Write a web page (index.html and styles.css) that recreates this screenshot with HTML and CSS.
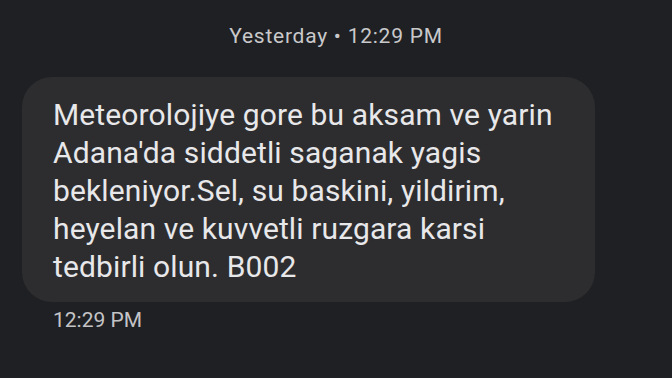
FILE: index.html
```html
<!DOCTYPE html>
<html>
<head>
<meta charset="utf-8">
<link rel="stylesheet" href="styles.css">
</head>
<body>
<div class="thread">
  <div class="day">Yesterday • 12:29 PM</div>
  <div class="bubble">Meteorolojiye gore bu aksam ve yarin<br>Adana'da siddetli saganak yagis<br>bekleniyor.Sel, su baskini, yildirim,<br>heyelan ve kuvvetli ruzgara karsi<br>tedbirli olun. B002</div>
  <div class="time">12:29 PM</div>
</div>
</body>
</html>
```
FILE: styles.css
```css
html, body {
  margin: 0;
  padding: 0;
  background: #1f2023;
  width: 672px;
  height: 378px;
  overflow: hidden;
}
.thread {
  display: flex;
  flex-direction: column;
  align-items: flex-start;
  font-family: Roboto, "Noto Sans", sans-serif;
}
.day {
  align-self: center;
  margin-top: 24px;
  font-size: 21px;
  line-height: 24px;
  letter-spacing: 0.75px;
  color: #c9c9cb;
}
.bubble {
  margin: 29px 0 0 22px;
  width: 573px;
  box-sizing: border-box;
  padding: 19px 20px 16px 31px;
  background: #2d2d2f;
  border-radius: 30px;
  color: #e8e8ea;
  font-size: 30px;
  line-height: 38px;
  letter-spacing: 0.12px;
  white-space: nowrap;
}
.time {
  margin: 6px 0 0 53px;
  font-size: 21px;
  line-height: 24px;
  color: #c4c4c6;
}
```
